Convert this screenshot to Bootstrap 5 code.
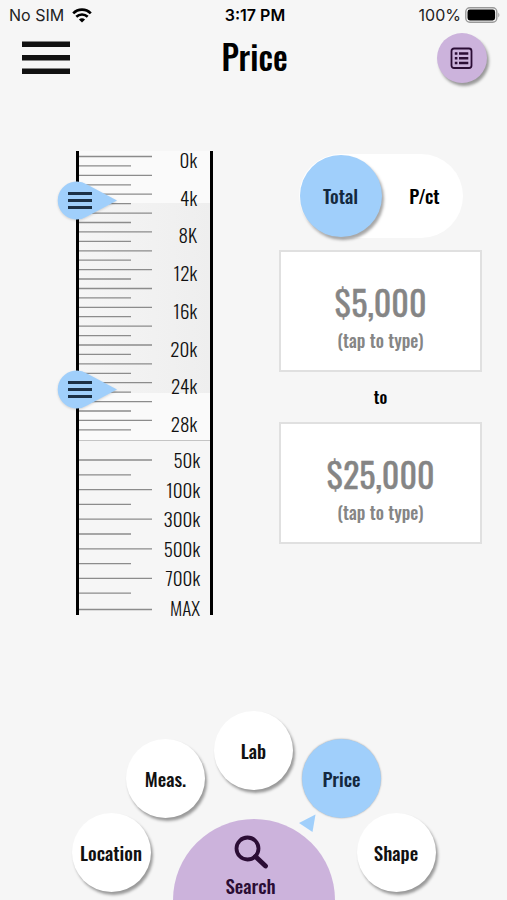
<!DOCTYPE html>
<html lang="en">
<head>
<meta charset="utf-8">
<meta name="viewport" content="width=device-width, initial-scale=1">
<title>Price</title>
<link href="https://cdn.jsdelivr.net/npm/bootstrap@5.3.0/dist/css/bootstrap.min.css" rel="stylesheet">
<style>
  :root { --sky: #a0cffb; --lilac: #ccb3dc; --plum: #2b0d35; --navy: #14293f; }
  body { background: #f6f6f6; color: #000; font-family: Oswald, "Liberation Sans Narrow", "Liberation Sans", sans-serif; }
  .status-bar { font: 16px/20px Inter, sans-serif; padding: 0 6px 0 9px; height: 30px; color: #222; }
  .side { flex: 1 1 0; }
  .app-header { height: 56px; padding: 0 20px 0 22px; }
  .app-title { font-size: 33px; line-height: 40px; padding-bottom: 2px; font-weight: 500; }
  .lift { box-shadow: 2px 3px 3px rgba(0,0,0,.38); }
  .list-btn { width: 50px; height: 50px; background: var(--lilac); color: var(--plum); }
  .panel { padding: 65px 25px 0 76px; gap: 66px; }

  .ruler { width: 137px; border: solid #000; border-width: 0 3px; }
  .scale-top { height: 290px; border-bottom: 1px solid #c4c4c4; background: #fafafa; }
  .scale-low { height: 174px; }
  .ticks { width: 73px; stroke: #8c8c8c; stroke-width: 1.3; }
  .marks { font-size: 19px; line-height: 16px; font-weight: 300; color: #111; }
  .scale-top .marks { padding: 0 13px 9px 0; }
  .scale-low .marks { padding: 10px 10px 0 0; }
  .band { top: 52px; height: 190px; left: 0; right: 0; background: linear-gradient(90deg, #f5f5f5, #eeeeee); }
  .handle { left: -23px; width: 62px; height: 40px; }
  .handle-min { top: 29px; }
  .handle-max { top: 218px; }
  .handle svg { filter: drop-shadow(0 1px 1px rgba(0,0,0,.15)); }

  .toggle { width: 164px; height: 84px; padding: 1px; margin: 3px 0 12px; background: #fff; }
  .toggle label { flex: none; width: 82px; height: 82px; padding-bottom: 2px; font-size: 19px; font-weight: 500; cursor: pointer; }
  .btn-check:checked + label { background: var(--sky); color: var(--navy); box-shadow: 2px 3px 3px rgba(0,0,0,.35); }
  .amount { height: 122px; background: #fff; border: 2px solid #e0e0e0; color: #858585; padding-top: 9px; }
  .amount input { font-size: 34px; line-height: 46px; height: 46px; color: #858585; font-weight: 400; -webkit-text-stroke: .4px #858585; }
  .amount span { font-size: 18px; line-height: 24px; font-weight: 500; margin-top: 3px; }
  .between { font-size: 17px; line-height: 50px; font-weight: 500; }

  .disc { width: 79px; height: 79px; background: #fff; color: #111; font-size: 19px; font-weight: 500; flex: none; }
  .disc.current { background: var(--sky); color: var(--navy); box-shadow: 0 0 2px rgba(0,0,0,.35); }
  .ring-mid { gap: 97px; margin-top: -51px; }
  .ring-low { gap: 22px; margin-top: -5px; height: 87px; }
  .dome { width: 162px; height: 81px; margin-top: 6px; border-radius: 81px 81px 0 0; background: var(--lilac); color: var(--plum); font-size: 19px; font-weight: 500; line-height: 24px; padding: 16px 6px 0 0; }
  .pointer { left: -3px; top: 75px; }
</style>
</head>
<body>
<div class="d-flex flex-column min-vh-100 overflow-hidden">
  <div class="status-bar d-flex align-items-center">
    <div class="side d-flex align-items-center gap-2">
      <span>No SIM</span>
      <svg width="20" height="15" viewBox="0 0 20 15" fill="none" stroke="#000" stroke-width="2.6"><path d="M1.2 5.4C6 .4 14 .4 18.800 5.400M4.300 8.800C7.500 5.700 12.500 5.700 15.700 8.800"/><path d="M10 14.500 6.900 11.400Q10 9 13.100 11.400Z" fill="#000" stroke="none"/></svg>
    </div>
    <strong class="fw-semibold text-black">3:17 PM</strong>
    <div class="side d-flex align-items-center justify-content-end gap-1">
      <span>100%</span>
      <svg width="36" height="16" viewBox="0 0 36 16"><rect x=".8" y=".8" width="31" height="14.400" rx="4" fill="none" stroke="#999" stroke-width="1.400"/><rect x="2.500" y="2.500" width="27.600" height="11" rx="2.400"/><path d="M33.300 5.500q2.200 2.500 0 5z" fill="#999"/></svg>
    </div>
  </div>

  <header class="app-header d-flex align-items-center">
    <div class="side"><button type="button" class="btn p-0 border-0 d-flex" aria-label="Menu"><svg width="48" height="34" viewBox="0 0 48 34" fill="#111"><path d="M0 .500h48v5.500H0zM0 14h48v5.500H0zM0 27.500h48v5.500H0z"/></svg></button></div>
    <h1 class="app-title mb-0">Price</h1>
    <div class="side d-flex justify-content-end">
      <button type="button" class="list-btn lift btn p-0 border-0 rounded-circle d-flex align-items-center justify-content-center" aria-label="Results list">
        <svg width="24" height="23" viewBox="0 0 24 23" fill="none" stroke="currentColor" stroke-width="1.800"><rect x="1.500" y="1.500" width="20" height="19.500" rx="2.500"/><path d="M4.800 6.500h2.600M9 6.500h9.300M4.800 11.200h2.600M9 11.200h9.300M4.800 16h2.600M9 16h9.300" stroke-width="2.400"/></svg>
      </button>
    </div>
  </header>

  <main class="panel d-flex align-items-start">
    <div class="ruler position-relative flex-shrink-0">
      <div class="scale-top d-flex justify-content-between">
        <div class="band position-absolute"></div>
        <svg class="ticks position-relative" height="289" viewBox="0 0 73 289"><path d="M0 5.500h73M0 24.400h73M0 43.200h73M0 62.100h73M0 80.900h73M0 99.800h73M0 118.600h73M0 137.500h73M0 156.300h73M0 175.200h73M0 194h73M0 212.900h73M0 231.700h73M0 250.600h73M0 269.400h73M0 14.900h52M0 33.800h52M0 52.600h52M0 71.500h52M0 90.300h52M0 109.200h52M0 128h52M0 146.900h52M0 165.700h52M0 184.600h52M0 203.400h52M0 222.300h52M0 241.100h52M0 260h52M0 278.800h52"/></svg>
        <div class="marks position-relative d-flex flex-column justify-content-between text-end">
          <span>0k</span><span>4k</span><span>8K</span><span>12k</span><span>16k</span><span>20k</span><span>24k</span><span>28k</span>
        </div>
      </div>
      <div class="scale-low d-flex justify-content-between">
        <svg class="ticks" height="174" viewBox="0 0 73 174"><path d="M0 19h73M0 48.600h73M0 78.200h73M0 107.800h73M0 137.400h73M0 168.500h73M0 33.800h52M0 63.400h52M0 93h52M0 122.600h52M0 152.200h52"/></svg>
        <div class="marks d-flex flex-column justify-content-between text-end">
          <span>50k</span><span>100k</span><span>300k</span><span>500k</span><span>700k</span><span>MAX</span>
        </div>
      </div>
      <button type="button" class="handle handle-min position-absolute btn p-0 border-0 d-flex" aria-label="Minimum price">
        <svg width="62" height="40" viewBox="0 0 62 40"><path d="M61 20.500 31 4.500A19 19 0 1 0 31 36.500Z" fill="#a0cffb"/><path d="M12 13.500h24M12 20.500h24M12 27.500h24" stroke="#1b3046" stroke-width="2.800"/></svg>
      </button>
      <button type="button" class="handle handle-max position-absolute btn p-0 border-0 d-flex" aria-label="Maximum price">
        <svg width="62" height="40" viewBox="0 0 62 40"><path d="M61 20.500 31 4.500A19 19 0 1 0 31 36.500Z" fill="#a0cffb"/><path d="M12 13.500h24M12 20.500h24M12 27.500h24" stroke="#1b3046" stroke-width="2.800"/></svg>
      </button>
    </div>

    <form class="flex-grow-1 d-flex flex-column align-items-center">
      <div class="toggle rounded-pill d-flex" role="group" aria-label="Price basis">
        <input type="radio" class="btn-check" name="basis" id="basis-total" checked>
        <label for="basis-total" class="rounded-circle d-flex align-items-center justify-content-center">Total</label>
        <input type="radio" class="btn-check" name="basis" id="basis-carat">
        <label for="basis-carat" class="rounded-circle d-flex align-items-center justify-content-center ps-1">P/ct</label>
      </div>
      <label class="amount w-100 d-flex flex-column justify-content-center text-center">
        <input type="text" class="w-100 p-0 border-0 bg-transparent text-center" value="$5,000">
        <span>(tap to type)</span>
      </label>
      <div class="between">to</div>
      <label class="amount w-100 d-flex flex-column justify-content-center text-center">
        <input type="text" class="w-100 p-0 border-0 bg-transparent text-center" value="$25,000">
        <span>(tap to type)</span>
      </label>
    </form>
  </main>

  <nav class="mt-auto" aria-label="Filters">
    <div class="d-flex justify-content-center">
      <a href="#lab" class="disc lift rounded-circle d-flex align-items-center justify-content-center text-decoration-none">Lab</a>
    </div>
    <div class="ring-mid d-flex justify-content-center">
      <a href="#measurements" class="disc lift rounded-circle d-flex align-items-center justify-content-center text-decoration-none">Meas.</a>
      <a href="#price" aria-current="page" class="disc current position-relative rounded-circle d-flex align-items-center justify-content-center text-decoration-none">Price
        <svg class="pointer position-absolute" width="17" height="18" viewBox="0 0 17 18"><path d="M0 9 16.500.500 13.500 18Z" fill="#a0cffb"/></svg>
      </a>
    </div>
    <div class="ring-low d-flex justify-content-center align-items-start">
      <a href="#location" class="disc lift rounded-circle d-flex align-items-center justify-content-center text-decoration-none">Location</a>
      <button type="button" class="dome border-0 d-flex flex-column align-items-center">
        <svg class="flex-shrink-0" width="34" height="34" viewBox="0 0 34 34" fill="none" stroke="currentColor" stroke-width="3.800"><circle cx="13.500" cy="13.500" r="11"/><path d="M21.500 21.500 31.500 31" stroke-width="4.800" stroke-linecap="round"/></svg>
        <span class="mt-1">Search</span>
      </button>
      <a href="#shape" class="disc lift rounded-circle d-flex align-items-center justify-content-center text-decoration-none">Shape</a>
    </div>
  </nav>
</div>
<script src="https://cdn.jsdelivr.net/npm/bootstrap@5.3.0/dist/js/bootstrap.bundle.min.js"></script>
</body>
</html>
